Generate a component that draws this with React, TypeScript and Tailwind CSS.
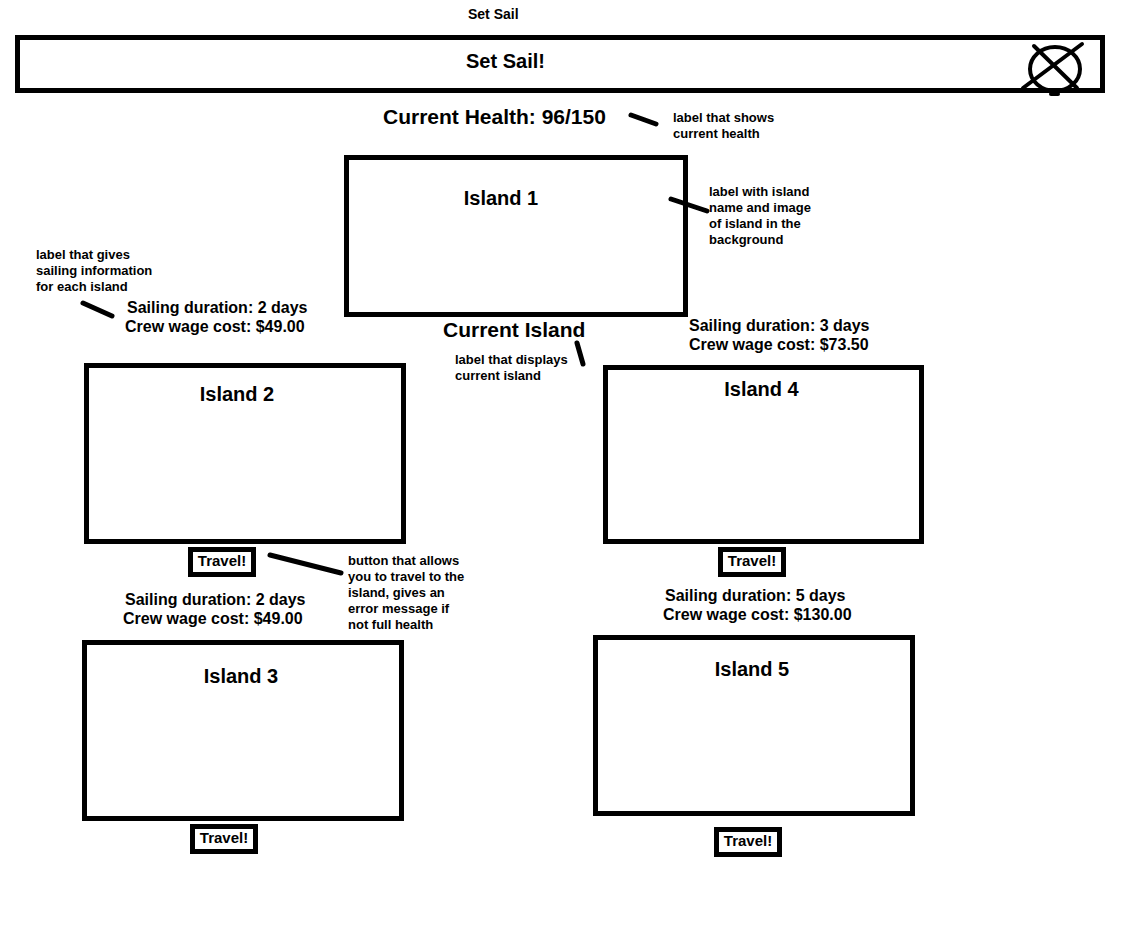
import React from "react";

function SailInfo({ days, cost, className, lead = "pl-[2px]" }: { days: number; cost: string; className: string; lead?: string }) {
  return (
    <div className={"text-[16px] leading-[19px] font-bold whitespace-nowrap " + className}>
      <div className={lead}>Sailing duration: {days} days</div>
      <div>Crew wage cost: {cost}</div>
    </div>
  );
}

function IslandBox({ name, className }: { name: string; className: string }) {
  return (
    <div className={"border-[5px] border-black bg-white flex justify-center " + className}>
      <span className="text-[20px] leading-[24px] font-bold h-[24px]">{name}</span>
    </div>
  );
}

function TravelButton({ className }: { className: string }) {
  return (
    <button
      className={
        "w-[68px] h-[30px] border-[5px] border-black bg-white flex items-start justify-center text-[15px] leading-[18px] font-bold text-black p-0 " +
        className
      }
    >
      Travel!
    </button>
  );
}

function Note({ lines, className }: { lines: string[]; className: string }) {
  return (
    <div className={"text-[13px] leading-[16px] font-bold whitespace-nowrap " + className}>
      {lines.map((l) => (
        <div key={l}>{l}</div>
      ))}
    </div>
  );
}

export default function App() {
  return (
    <div className="relative w-[1121px] h-[952px] bg-white overflow-hidden font-['Liberation_Sans',Arial,sans-serif] text-black">
      {/* window title */}
      <div className="pt-[6px] pl-[468px] text-[14px] leading-[16px] font-bold">Set Sail</div>

      {/* header bar */}
      <div className="mt-[13px] ml-[15px] w-[1090px] h-[58px] border-[5px] border-black pl-[446px] pt-[9px]">
        <h1 className="text-[20px] leading-[24px] font-bold">Set Sail!</h1>
      </div>

      {/* health */}
      <div className="mt-[12px] pl-[383px] text-[21px] leading-[24px] font-bold">Current Health: 96/150</div>

      {/* current island picture */}
      <IslandBox name="Island 1" className="mt-[26px] ml-[344px] w-[344px] h-[162px] pt-[26px] pr-[30px]" />

      {/* destinations */}
      <div className="flex mt-[-19px] pl-[82px]">
        {/* left column */}
        <div className="w-[324px] flex flex-col items-start">
          <SailInfo days={2} cost="$49.00" className="ml-[43px]" />
          <IslandBox name="Island 2" className="mt-[27px] ml-[2px] w-[322px] h-[181px] pt-[14px] pr-[16px]" />
          <TravelButton className="mt-[3px] ml-[106px]" />
          <SailInfo days={2} cost="$49.00" className="mt-[13px] ml-[41px]" />
          <IslandBox name="Island 3" className="mt-[12px] w-[322px] h-[181px] pt-[19px] pr-[4px]" />
          <TravelButton className="mt-[3px] ml-[108px]" />
        </div>

        {/* middle column */}
        <div className="w-[187px] flex flex-col items-start">
          <div className="mt-[20px] ml-[37px] text-[21px] leading-[24px] font-bold whitespace-nowrap">Current Island</div>
          <Note lines={["label that displays", "current island"]} className="mt-[10px] ml-[49px]" />
        </div>

        {/* right column */}
        <div className="w-[331px] flex flex-col items-start">
          <SailInfo days={3} cost="$73.50" className="mt-[18px] ml-[96px]" lead="pl-0" />
          <IslandBox name="Island 4" className="mt-[11px] ml-[10px] w-[321px] h-[179px] pt-[7px] pr-[4px]" />
          <TravelButton className="mt-[3px] ml-[125px]" />
          <SailInfo days={5} cost="$130.00" className="mt-[9px] ml-[70px]" />
          <IslandBox name="Island 5" className="mt-[11px] w-[322px] h-[181px] pt-[17px] pr-[4px]" />
          <TravelButton className="mt-[11px] ml-[121px]" />
        </div>
      </div>

      {/* annotation notes laid over the sketch */}
      <Note lines={["label that shows", "current health"]} className="absolute left-[673px] top-[110px]" />
      <Note
        lines={["label with island", "name and image", "of island in the", "background"]}
        className="absolute left-[709px] top-[184px]"
      />
      <Note
        lines={["label that gives", "sailing information", "for each island"]}
        className="absolute left-[36px] top-[247px]"
      />
      <Note
        lines={["button that allows", "you to travel to the", "island, gives an", "error message if", "not full health"]}
        className="absolute left-[348px] top-[553px]"
      />

      {/* hand-drawn strokes: annotation pointers and close icon */}
      <svg
        className="absolute left-0 top-0 pointer-events-none"
        width={1121}
        height={952}
        viewBox="0 0 1121 952"
        fill="none"
        stroke="black"
        strokeLinecap="round"
      >
        <g strokeWidth={5}>
          <line x1={631} y1={115} x2={656} y2={124} />
          <line x1={671} y1={199} x2={707} y2={211} />
          <line x1={83} y1={303} x2={112} y2={316} />
          <line x1={577} y1={343} x2={583} y2={364} />
          <line x1={270} y1={555} x2={341} y2={573} />
        </g>
        <g strokeWidth={4}>
          <ellipse cx={1055} cy={69} rx={25} ry={22} />
          <line x1={1023} y1={88} x2={1082} y2={44} />
          <line x1={1034} y1={46} x2={1077} y2={88} />
          <line x1={1051} y1={94} x2={1058} y2={94} />
        </g>
      </svg>
    </div>
  );
}
